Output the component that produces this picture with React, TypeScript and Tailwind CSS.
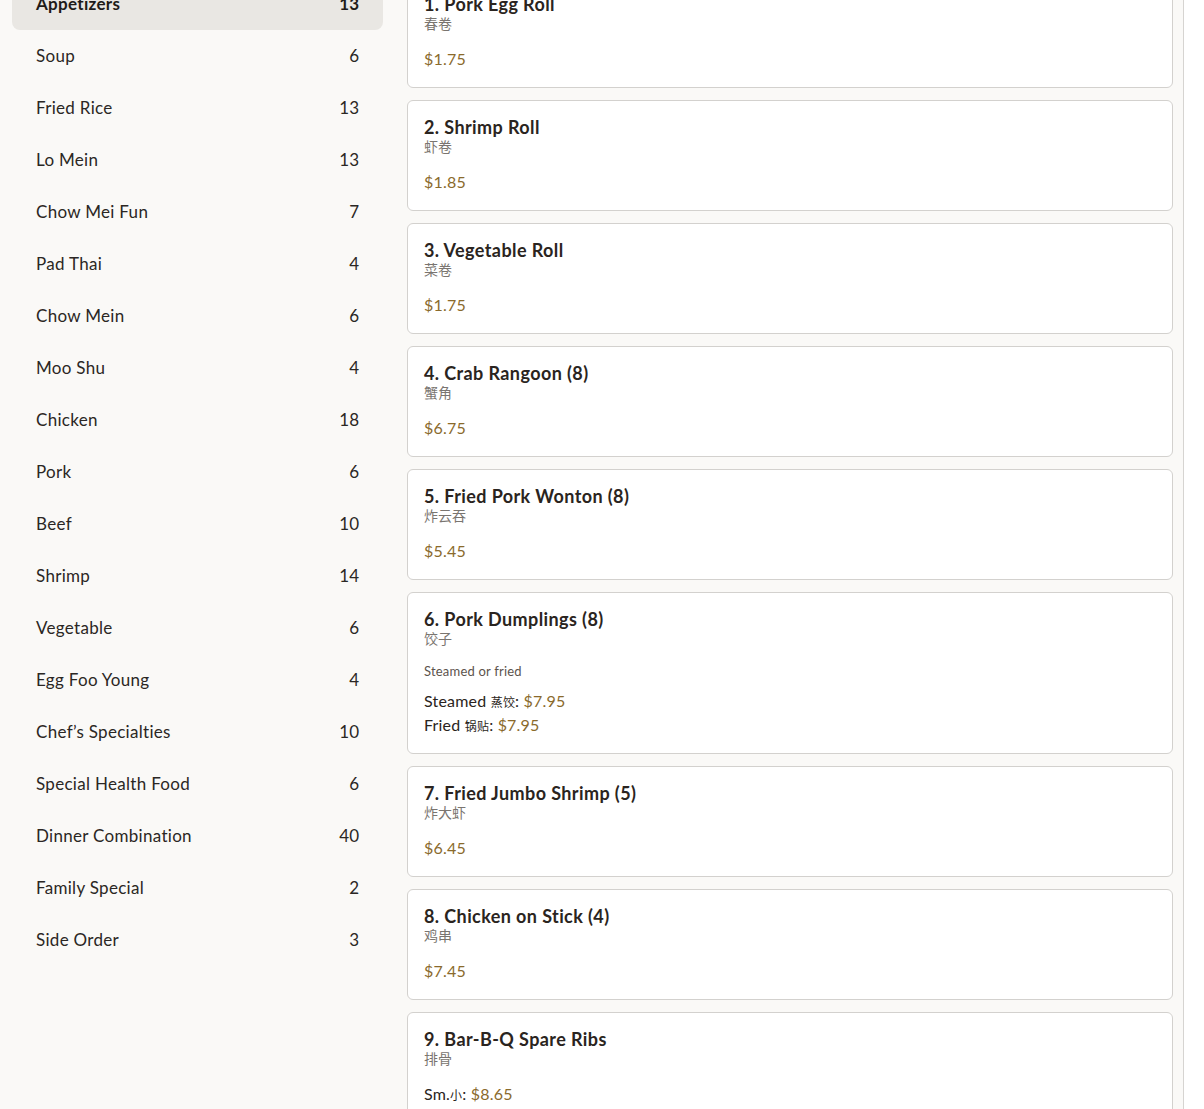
import React from 'react';

type Price = { label?: string; cn?: string; amount: string };
type Item = { name: string; cn: string; desc?: string; prices: Price[] };

const categories: [string, number][] = [
  ['Appetizers', 13],
  ['Soup', 6],
  ['Fried Rice', 13],
  ['Lo Mein', 13],
  ['Chow Mei Fun', 7],
  ['Pad Thai', 4],
  ['Chow Mein', 6],
  ['Moo Shu', 4],
  ['Chicken', 18],
  ['Pork', 6],
  ['Beef', 10],
  ['Shrimp', 14],
  ['Vegetable', 6],
  ['Egg Foo Young', 4],
  ['Chef’s Specialties', 10],
  ['Special Health Food', 6],
  ['Dinner Combination', 40],
  ['Family Special', 2],
  ['Side Order', 3],
];

const items: Item[] = [
  { name: '1. Pork Egg Roll', cn: '春卷', prices: [{ amount: '$1.75' }] },
  { name: '2. Shrimp Roll', cn: '虾卷', prices: [{ amount: '$1.85' }] },
  { name: '3. Vegetable Roll', cn: '菜卷', prices: [{ amount: '$1.75' }] },
  { name: '4. Crab Rangoon (8)', cn: '蟹角', prices: [{ amount: '$6.75' }] },
  { name: '5. Fried Pork Wonton (8)', cn: '炸云吞', prices: [{ amount: '$5.45' }] },
  {
    name: '6. Pork Dumplings (8)',
    cn: '饺子',
    desc: 'Steamed or fried',
    prices: [
      { label: 'Steamed', cn: '蒸饺', amount: '$7.95' },
      { label: 'Fried', cn: '锅贴', amount: '$7.95' },
    ],
  },
  { name: '7. Fried Jumbo Shrimp (5)', cn: '炸大虾', prices: [{ amount: '$6.45' }] },
  { name: '8. Chicken on Stick (4)', cn: '鸡串', prices: [{ amount: '$7.45' }] },
  {
    name: '9. Bar-B-Q Spare Ribs',
    cn: '排骨',
    prices: [{ label: 'Sm.', cn: '小', amount: '$8.65' }],
  },
];

function CategoryRow({ name, count, active }: { name: string; count: number; active: boolean }) {
  return (
    <div
      className={
        active
          ? 'flex items-center justify-between px-6 py-[14px] rounded-lg bg-[#e9e7e3] text-[#1f1b18] font-bold'
          : 'flex items-center justify-between px-6 py-[14px] text-[#2b2724]'
      }
    >
      <span className="text-[17px] leading-6 tracking-[0.3px]">{name}</span>
      <span className="text-[17px] leading-6">{count}</span>
    </div>
  );
}

function MenuCard({ item }: { item: Item }) {
  return (
    <div className="bg-white border border-[#d3d1ce] rounded-md px-4 pt-4 pb-4">
      <div className="text-[18px] leading-5 font-bold tracking-[0.4px] text-[#2a2420]">{item.name}</div>
      <div className="text-[14px] leading-5 text-[#7a7570]">{item.cn}</div>
      {item.desc && (
        <div className="mt-3 text-[13px] leading-5 tracking-[0.2px] text-[#5c534c]">{item.desc}</div>
      )}
      <div className={item.desc ? 'mt-2' : 'mt-[13px]'}>
        {item.prices.map((p, i) => (
          <div key={i} className="h-6 text-[16px] leading-6 tracking-[0.2px] text-[#2a2420]">
            {p.label && (
              <>
                {p.label}
                {p.label !== 'Sm.' ? ' ' : ''}
                <span className="text-[12px] leading-none">{p.cn}</span>:{' '}
              </>
            )}
            <span className="text-[#8a6a2c]">{p.amount}</span>
          </div>
        ))}
      </div>
    </div>
  );
}

export default function App() {
  return (
    <div className="h-[1109px] overflow-hidden bg-white flex font-['Lato','Noto_Sans_CJK_SC',sans-serif]">
      <div className="w-[1184px] shrink-0 bg-[#faf9f7] border-r border-[#d6d4d1] overflow-hidden">
        <div className="flex items-start -mt-[22px] pl-3">
          {/* Category sidebar */}
          <div className="w-[371px] shrink-0 flex flex-col">
            {categories.map(([name, count], i) => (
              <CategoryRow key={name} name={name} count={count} active={i === 0} />
            ))}
          </div>

          {/* Menu items */}
          <div className="flex-1 min-w-0 -mt-px pl-6 pr-[10px] flex flex-col gap-3">
            {items.map(item => (
              <MenuCard key={item.name} item={item} />
            ))}
          </div>
        </div>
      </div>
      <div className="flex-1 bg-white" />
    </div>
  );
}
